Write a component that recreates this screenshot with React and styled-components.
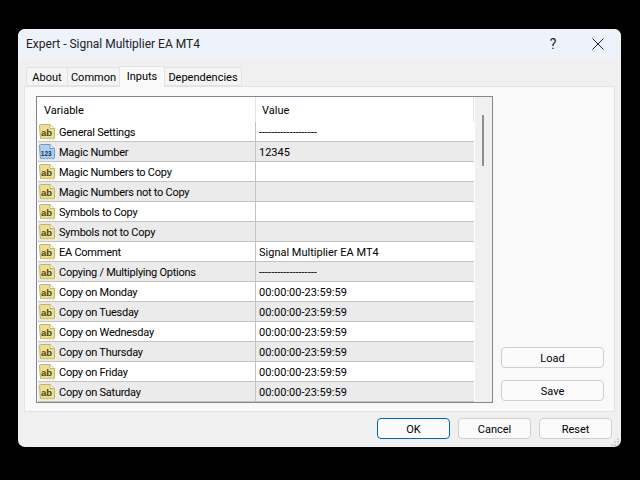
import React from 'react';
import styled, { createGlobalStyle } from 'styled-components';

const GlobalStyle = createGlobalStyle`
  html, body {
    margin: 0;
    height: 100%;
    background: #000;
  }
  body {
    font-family: Roboto, "Liberation Sans", sans-serif;
    font-size: 11px;
    color: #000;
  }
`;

const Screen = styled.div`
  width: 640px;
  height: 480px;
  box-sizing: border-box;
  padding: 29px 19px 33px 18px;
`;

const Dialog = styled.div`
  position: relative;
  height: 100%;
  display: flex;
  flex-direction: column;
  background: #f0f0f0;
  border-radius: 7px;
  overflow: hidden;
`;

const TitleBar = styled.div`
  flex: none;
  height: 30px;
  display: flex;
  align-items: center;
  padding-left: 8px;
  background: #eef2fb;
  font-size: 12px;
  color: #222;
`;

const Title = styled.span`
  flex: 1;
`;

const HelpMark = styled.span`
  width: 46px;
  text-align: center;
  font-size: 14px;
  color: #222;
`;

const CloseButton = styled.span`
  width: 44px;
  margin-right: 1px;
  display: flex;
  justify-content: center;
`;

const Tabs = styled.div`
  flex: none;
  height: 27px;
  box-sizing: border-box;
  padding-left: 9px;
  display: flex;
  align-items: flex-end;
  position: relative;
  z-index: 1;
`;

const Tab = styled.div`
  box-sizing: border-box;
  width: ${p => p.$w}px;
  height: ${p => (p.$active ? '21px' : '19px')};
  margin-bottom: ${p => (p.$active ? '-1px' : '0')};
  padding: ${p => (p.$active ? '0 0 2px' : '1px 0 0')};
  display: flex;
  align-items: center;
  justify-content: center;
  background: ${p => (p.$active ? '#f9f9f9' : '#f4f4f4')};
  border: 1px solid #e3e3e3;
  border-bottom: ${p => (p.$active ? 'none' : '1px solid #e3e3e3')};
  border-radius: 2px 2px 0 0;
  margin-left: -1px;
`;

const Panel = styled.div`
  flex: none;
  height: 326px;
  margin: 0 6px;
  box-sizing: border-box;
  padding: 9px 10px 9px 11px;
  display: flex;
  background: #f9f9f9;
  border: 1px solid #e3e3e3;
`;

const ListBox = styled.div`
  width: 457px;
  height: 307px;
  box-sizing: border-box;
  display: flex;
  background: #fff;
  border: 1px solid #858592;
  overflow: hidden;
`;

const Grid = styled.div`
  width: 437px;
  flex: none;
  padding-left: 1px;
  box-sizing: border-box;
`;

const HeaderRow = styled.div`
  height: 25px;
  display: flex;
  align-items: center;
  background: #fff;
`;

const HeaderCell = styled.div`
  box-sizing: border-box;
  width: ${p => p.$w}px;
  height: 100%;
  padding-left: ${p => p.$pad}px;
  padding-top: 1px;
  display: flex;
  align-items: center;
  border-right: 1px solid #e5e5e5;
`;

const Row = styled.div`
  height: 20px;
  box-sizing: border-box;
  display: flex;
  align-items: center;
  background: ${p => (p.$odd ? '#ebebeb' : '#fff')};
  border-bottom: 1px solid #c4c4c4;
`;

const NameCell = styled.div`
  box-sizing: border-box;
  width: 218px;
  height: 100%;
  display: flex;
  align-items: center;
  gap: 4px;
  padding: 1px 0 0 1px;
  letter-spacing: -0.25px;
  border-right: 1px solid #c4c4c4;
`;

const ValueCell = styled.div`
  flex: 1;
  padding: 1px 0 0 3px;
  white-space: nowrap;
`;

const ScrollTrack = styled.div`
  flex: 1;
  position: relative;
  background: #f0f0f0;
  margin-left: 1px;
`;

const ScrollThumb = styled.div`
  position: absolute;
  left: 7px;
  top: 18px;
  width: 2px;
  height: 51px;
  background: #8f8f8f;
`;

const SideColumn = styled.div`
  flex: 1;
  display: flex;
  flex-direction: column;
  align-items: flex-end;
  justify-content: flex-end;
  gap: 12px;
  padding-bottom: 1px;
`;

const Button = styled.button`
  box-sizing: border-box;
  width: ${p => p.$w}px;
  height: 21px;
  padding: 1px 0 0;
  font: inherit;
  color: #000;
  background: #fbfbfb;
  border: ${p => (p.$primary ? '1px solid #0067c0' : '1px solid #cfcfcf')};
  border-radius: 4px;
`;

const Footer = styled.div`
  flex: 1;
  display: flex;
  justify-content: flex-end;
  align-items: flex-start;
  gap: 8px;
  padding: 6px 9px 0 0;
`;

const Grip = styled.svg`
  position: absolute;
  right: 0;
  bottom: 0;
`;

function AbIcon({ kind }) {
  const isNum = kind === 'num';
  const fill = isNum ? '#b0d0ee' : '#ebe096';
  const stroke = isNum ? '#6f9bc9' : '#c4b55e';
  return (
    <svg width="16" height="16" viewBox="0 0 16 16" style={{ flex: 'none' }}>
      <path
        d="M.5 1.5q0-1 1-1h9.5l4.500 4v9.500l-1.500 1-1.500-1-1.500 1-1.500-1-1.500 1-1.500-1-1.500 1-1.500-1-1.500 1-.5-.5z"
        fill={fill}
        stroke={stroke}
      />
      <path d="M11 .5v4h4.500" fill="#fff" stroke={stroke} />
      {isNum ? (
        <text x="1.800" y="11.500" fontSize="6.500" fontWeight="700" fill="#0f2f5c" fontFamily="Liberation Sans, sans-serif" letterSpacing="0">123</text>
      ) : (
        <text x="2" y="11.500" fontSize="9.500" fontWeight="700" fill="#4a4412" fontFamily="Liberation Sans, sans-serif" letterSpacing="0">ab</text>
      )}
    </svg>
  );
}

const rows = [
  ['General Settings', '-------------------', 'ab'],
  ['Magic Number', '12345', 'num'],
  ['Magic Numbers to Copy', '', 'ab'],
  ['Magic Numbers not to Copy', '', 'ab'],
  ['Symbols to Copy', '', 'ab'],
  ['Symbols not to Copy', '', 'ab'],
  ['EA Comment', 'Signal Multiplier EA MT4', 'ab'],
  ['Copying / Multiplying Options', '-------------------', 'ab'],
  ['Copy on Monday', '00:00:00-23:59:59', 'ab'],
  ['Copy on Tuesday', '00:00:00-23:59:59', 'ab'],
  ['Copy on Wednesday', '00:00:00-23:59:59', 'ab'],
  ['Copy on Thursday', '00:00:00-23:59:59', 'ab'],
  ['Copy on Friday', '00:00:00-23:59:59', 'ab'],
  ['Copy on Saturday', '00:00:00-23:59:59', 'ab'],
];

export default function App() {
  return (
    <Screen>
      <GlobalStyle />
      <Dialog>
        <TitleBar>
          <Title>Expert - Signal Multiplier EA MT4</Title>
          <HelpMark>?</HelpMark>
          <CloseButton>
            <svg width="12" height="12" viewBox="0 0 12 12">
              <path d="M.5.500l11 11M11.500.500l-11 11" stroke="#222" fill="none" />
            </svg>
          </CloseButton>
        </TitleBar>
        <Tabs>
          <Tab $w={42}>About</Tab>
          <Tab $w={53}>Common</Tab>
          <Tab $w={46} $active>Inputs</Tab>
          <Tab $w={78}>Dependencies</Tab>
        </Tabs>
        <Panel>
          <ListBox>
            <Grid>
              <HeaderRow>
                <HeaderCell $w={218} $pad={6}>Variable</HeaderCell>
                <HeaderCell $w={218} $pad={6}>Value</HeaderCell>
              </HeaderRow>
              {rows.map(([name, value, kind], i) => (
                <Row key={name} $odd={i % 2 === 1}>
                  <NameCell>
                    <AbIcon kind={kind} />
                    {name}
                  </NameCell>
                  <ValueCell>{value}</ValueCell>
                </Row>
              ))}
            </Grid>
            <ScrollTrack>
              <ScrollThumb />
            </ScrollTrack>
          </ListBox>
          <SideColumn>
            <Button $w={103}>Load</Button>
            <Button $w={103}>Save</Button>
          </SideColumn>
        </Panel>
        <Footer>
          <Button $w={73} $primary>OK</Button>
          <Button $w={73}>Cancel</Button>
          <Button $w={73}>Reset</Button>
        </Footer>
        <Grip width="10" height="10" viewBox="0 0 10 10">
          <path d="M6 1h2v2H6zM3 4h2v2H3zM6 4h2v2H6zM0 7h2v2H0zM3 7h2v2H3zM6 7h2v2H6z" fill="#d2d2d2" />
        </Grip>
      </Dialog>
    </Screen>
  );
}
